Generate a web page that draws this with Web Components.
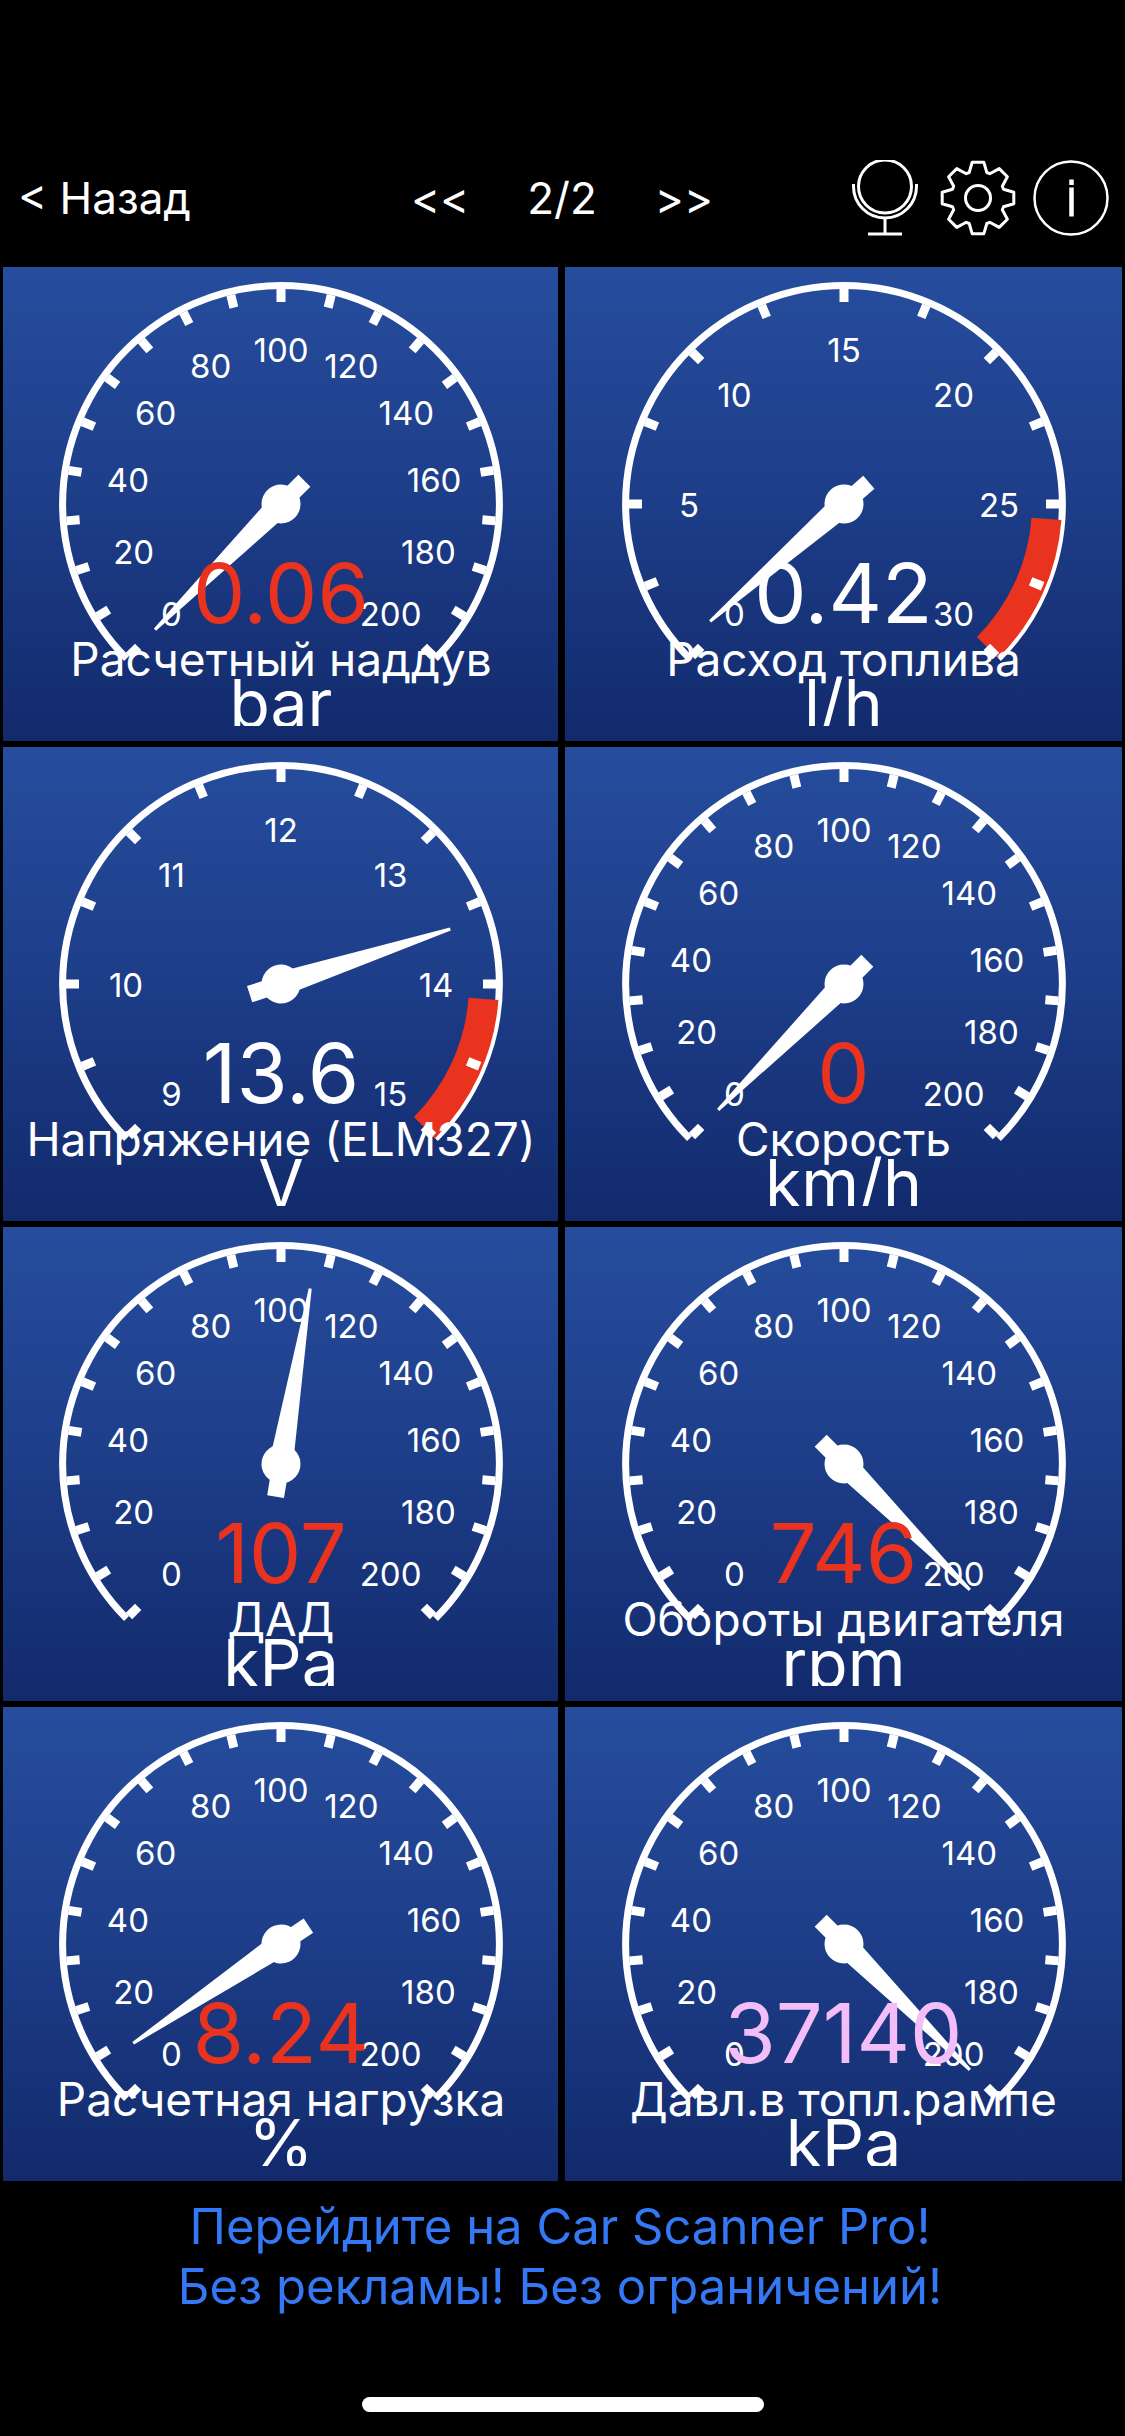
<!DOCTYPE html>
<html lang="ru">
<head>
<meta charset="utf-8">
<title>Car Scanner</title>
<style>
html,body{margin:0;padding:0;background:#000;}
body{width:1125px;height:2436px;overflow:hidden;font-family:Inter,"Liberation Sans",sans-serif;color:#fff;}
.page{display:flex;flex-direction:column;height:2436px;}
</style>
</head>
<body>
<div class="page">
    <nav-bar page="2/2"></nav-bar>
    <gauge-grid>
        <gauge-card labels="0,20,40,60,80,100,120,140,160,180,200" ticks="20" reading="0.06" min="0" max="200" color="#e9331f">
            <span slot="value">0.06</span>Расчетный наддув<span slot="unit">bar</span>
        </gauge-card>
        <gauge-card labels="0,5,10,15,20,25,30" ticks="12" reading="0.42" min="0" max="30" red>
            <span slot="value">0.42</span>Расход топлива<span slot="unit">l/h</span>
        </gauge-card>
        <gauge-card labels="9,10,11,12,13,14,15" ticks="12" reading="13.6" min="9" max="15" red>
            <span slot="value">13.6</span>Напряжение (ELM327)<span slot="unit">V</span>
        </gauge-card>
        <gauge-card labels="0,20,40,60,80,100,120,140,160,180,200" ticks="20" reading="0" min="0" max="200" color="#e9331f">
            <span slot="value">0</span>Скорость<span slot="unit">km/h</span>
        </gauge-card>
        <gauge-card labels="0,20,40,60,80,100,120,140,160,180,200" ticks="20" reading="107" min="0" max="200" color="#e9331f">
            <span slot="value">107</span>ДАД<span slot="unit">kPa</span>
        </gauge-card>
        <gauge-card labels="0,20,40,60,80,100,120,140,160,180,200" ticks="20" reading="746" min="0" max="200" color="#e9331f">
            <span slot="value">746</span>Обороты двигателя<span slot="unit">rpm</span>
        </gauge-card>
        <gauge-card labels="0,20,40,60,80,100,120,140,160,180,200" ticks="20" reading="8.24" min="0" max="200" color="#e9331f">
            <span slot="value">8.24</span>Расчетная нагрузка<span slot="unit">%</span>
        </gauge-card>
        <gauge-card labels="0,20,40,60,80,100,120,140,160,180,200" ticks="20" reading="37140" min="0" max="200" color="#f3bdf7">
            <span slot="value">37140</span>Давл.в топл.рампе<span slot="unit">kPa</span>
        </gauge-card>
    </gauge-grid>
    <promo-banner>
        <span>Перейдите на Car Scanner Pro!</span>
        <span>Без рекламы! Без ограничений!</span>
    </promo-banner>
    <home-bar></home-bar>
</div>
<script>
class NavBar extends HTMLElement{

    constructor(){

        super();
        this.attachShadow({mode:"open"});
        const page=this.getAttribute("page") || "";

        // gear outline: 8 teeth, one tooth at the top
        let gear="";
        for(let k=0;k<8;k++){
            const a=k*Math.PI/4;
            for(const [x,y] of [[-8.8,-25.5],[-5.8,-35.8],[5.8,-35.8],[8.8,-25.5]]){
                const px=x*Math.cos(a)-y*Math.sin(a);
                const py=x*Math.sin(a)+y*Math.cos(a);
                gear+=(gear?"L":"M")+px.toFixed(1)+" "+py.toFixed(1);
            }
        }
        gear+="Z";

        this.shadowRoot.innerHTML=`
            <style>
            :host{
                display:grid;
                grid-template-columns:393px 441px 1fr;
                align-items:center;
                height:75px;
                padding:160px 0 32px 18px;
                font-size:44px;
                line-height:75px;
                color:#fff;
            }
            .pager{
                display:flex;
                gap:58px;
            }
            .icons{
                display:flex;
                align-items:center;
            }
            svg{
                display:block;
                height:76px;
                fill:none;
                stroke:#fff;
            }
            .gear{margin-left:22px;}
            .info{margin-left:17px;}
            </style>
            <span>&lt; Назад</span>
            <div class="pager"><span>&lt;&lt;</span><span>${page}</span><span>&gt;&gt;</span></div>
            <div class="icons">
                <svg width="66" viewBox="-33 -38 66 76" stroke-width="3">
                    <circle cx="0" cy="-11.5" r="26.5"/>
                    <path d="M-31.5 -14V-11.5A31.5 31.5 0 0 0 31.5 -11.5V-14"/>
                    <path d="M0 20V36M-17 36H17"/>
                </svg>
                <svg class="gear" width="76" viewBox="-38 -38 76 76" stroke-width="3">
                    <path d="${gear}" stroke-linejoin="round"/>
                    <circle cx="0" cy="0" r="12.5"/>
                </svg>
                <svg class="info" width="76" viewBox="-38 -38 76 76" stroke-width="2.5">
                    <circle cx="0" cy="0" r="36.5"/>
                    <path d="M0.5 -18.5V-13M0.5 -10.5V18.5" stroke-width="4.5"/>
                </svg>
            </div>
        `;
    }

}

class GaugeGrid extends HTMLElement{

    constructor(){

        super();
        this.attachShadow({mode:"open"});
        this.shadowRoot.innerHTML=`
            <style>
            :host{
                display:grid;
                grid-template-columns:555px 557px;
                grid-auto-rows:474px;
                gap:6px 7px;
                padding:0 3px;
            }
            </style>
            <slot></slot>
        `;
    }

}

class GaugeCard extends HTMLElement{

    constructor(){

        super();
        this.attachShadow({mode:"open"});
        const labels=(this.getAttribute("labels") || "").split(",");
        const ticks=Number(this.getAttribute("ticks"));
        const min=Number(this.getAttribute("min"));
        const max=Number(this.getAttribute("max"));
        const reading=Math.min(Number(this.getAttribute("reading")),max);
        const color=this.getAttribute("color") || "#fff";
        const angle=-135+(reading-min)/(max-min)*270;

        const polar=(r,deg)=>{
            const a=deg*Math.PI/180;
            return [(r*Math.sin(a)).toFixed(2),(-r*Math.cos(a)).toFixed(2)];
        };

        let tickMarks="";
        for(let i=0;i<=ticks;i++){
            const deg=-135+i*270/ticks;
            tickMarks+=`<rect x="-4.5" y="-215" width="9" height="13" transform="rotate(${deg})"/>`;
        }

        let labelMarks="";
        labels.forEach((text,i)=>{
            const [x,y]=polar(155,-135+i*270/(labels.length-1));
            labelMarks+=`<text x="${x}" y="${Number(y)+12.5}">${text}</text>`;
        });

        let red="";
        if(this.hasAttribute("red")){
            const [ax,ay]=polar(218,94.2);
            const [bx,by]=polar(218,135);
            const [cx,cy]=polar(188,135);
            const [dx,dy]=polar(188,94.2);
            red=`<path fill="#e9331f" d="M${ax} ${ay}A218 218 0 0 1 ${bx} ${by}L${cx} ${cy}A188 188 0 0 0 ${dx} ${dy}Z"/>`;
        }

        const [sx,sy]=polar(218.4,-135);
        const [ex,ey]=polar(218.4,135);

        this.shadowRoot.innerHTML=`
            <style>
            :host{
                display:grid;
                justify-items:center;
                background:linear-gradient(#264d9e,#1d3d88 50%,#122a6c);
                overflow:hidden;
                color:#fff;
            }
            svg,.readout{
                grid-area:1/1;
            }
            svg{
                display:block;
                width:556px;
                height:474px;
            }
            text{
                font-size:33px;
                fill:#fff;
                text-anchor:middle;
            }
            .readout{
                display:flex;
                flex-direction:column;
                align-items:center;
                padding-top:284px;
                white-space:nowrap;
            }
            .value{
                height:84px;
                font-size:83px;
                line-height:84px;
                color:${color};
            }
            .title{
                height:50px;
                margin-top:-1px;
                font-size:46px;
                line-height:50px;
            }
            .unit{
                height:50px;
                margin-top:-8px;
                overflow:hidden;
                font-size:66px;
                line-height:55px;
            }
            </style>
            <svg viewBox="-278 -237 556 474">
                <path d="M${sx} ${sy}A218.4 218.4 0 1 1 ${ex} ${ey}" fill="none" stroke="#fff" stroke-width="7"/>
                ${red}
                <g fill="#fff">${tickMarks}</g>
                ${labelMarks}
                <g fill="#fff" transform="rotate(${angle})">
                    <path d="M-12 0L-1.5 -178H1.5L12 0Z"/>
                    <rect x="-8.5" y="0" width="17" height="33"/>
                    <circle cx="0" cy="0" r="19.5"/>
                </g>
            </svg>
            <div class="readout">
                <div class="value"><slot name="value"></slot></div>
                <div class="title"><slot></slot></div>
                <div class="unit"><slot name="unit"></slot></div>
            </div>
        `;
    }

}

class PromoBanner extends HTMLElement{

    constructor(){

        super();
        this.attachShadow({mode:"open"});
        this.shadowRoot.innerHTML=`
            <style>
            :host{
                display:block;
                padding:16px 5px 0 0;
                font-size:49px;
                line-height:60px;
                text-align:center;
                color:#3478f6;
            }
            ::slotted(span){
                display:block;
            }
            </style>
            <slot></slot>
        `;
    }

}

class HomeBar extends HTMLElement{

    constructor(){

        super();
        this.attachShadow({mode:"open"});
        this.shadowRoot.innerHTML=`
            <style>
            :host{
                display:block;
                align-self:center;
                width:402px;
                height:15px;
                margin-top:80px;
                border-radius:8px;
                background:#fff;
            }
            </style>
        `;
    }

}

customElements.define("nav-bar",NavBar);
customElements.define("gauge-grid",GaugeGrid);
customElements.define("gauge-card",GaugeCard);
customElements.define("promo-banner",PromoBanner);
customElements.define("home-bar",HomeBar);
</script>
</body>
</html>
